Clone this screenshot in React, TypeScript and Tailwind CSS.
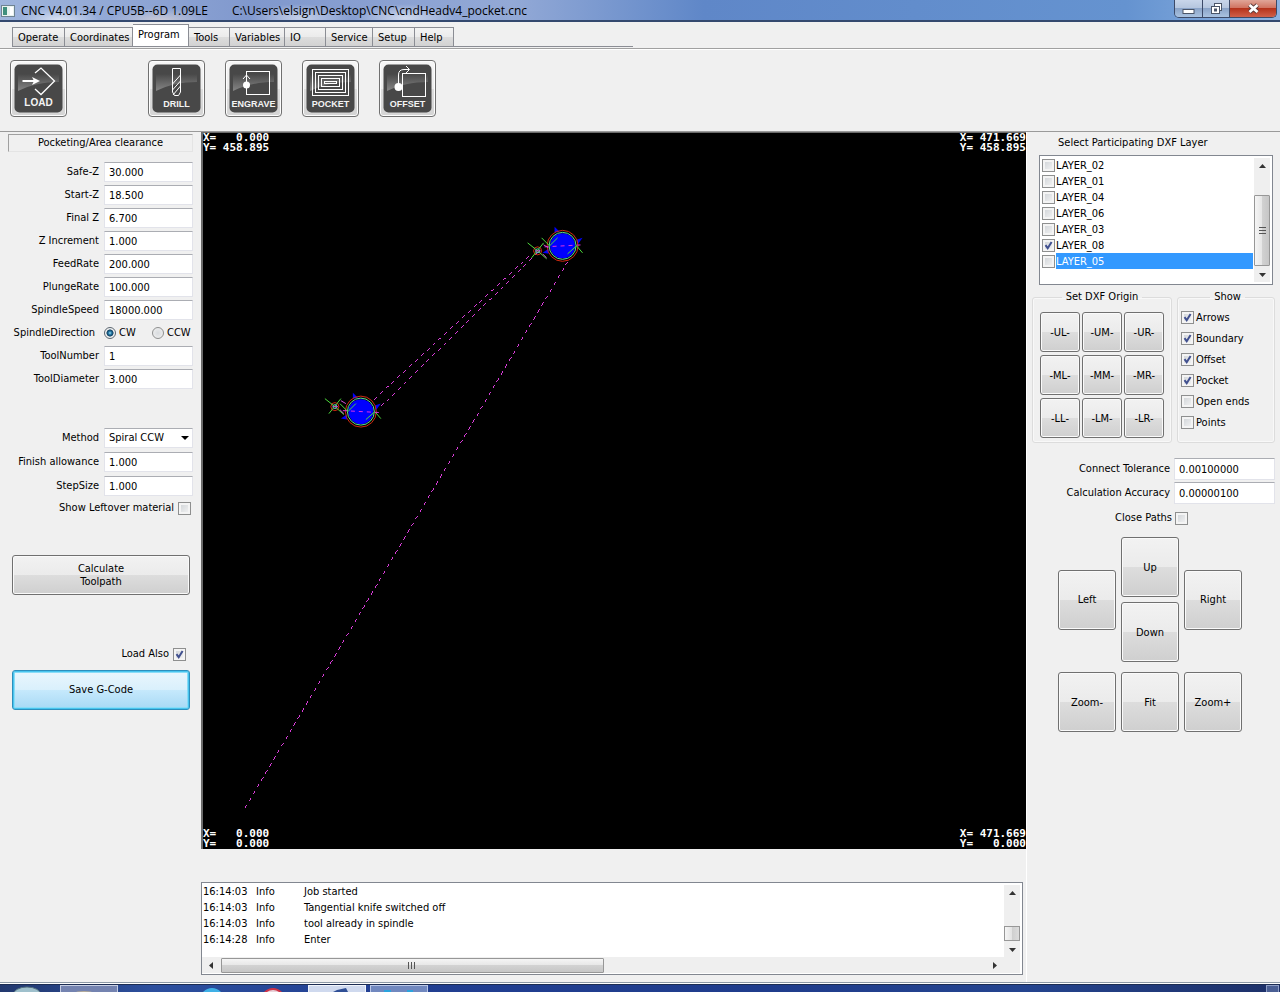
import { useState } from "react";
import type { ReactNode } from "react";
import clsx from "clsx";

const buttonFace =
  "border border-[#707070] rounded-[3px] text-center leading-[13px] bg-[linear-gradient(#f2f2f2,#ebebeb_50%,#dddddd_50%,#cfcfcf)] shadow-[inset_0_0_0_1px_#fafafa]";
const fieldFace = "h-5 border border-[#e2e3ea] border-t-[#abadb3] bg-white px-1 outline-none";

const tabs = [
  { name: "Operate", width: "w-[53px]" },
  { name: "Coordinates", width: "w-[68px]" },
  { name: "Program", width: "w-14" },
  { name: "Tools", width: "w-[41px]" },
  { name: "Variables", width: "w-[55px]" },
  { name: "IO", width: "w-[41px]" },
  { name: "Service", width: "w-[47px]" },
  { name: "Setup", width: "w-[42px]" },
  { name: "Help", width: "w-[39px]" },
];

const cutParams = [
  { label: "Safe-Z", value: "30.000" },
  { label: "Start-Z", value: "18.500" },
  { label: "Final Z", value: "6.700" },
  { label: "Z Increment", value: "1.000" },
  { label: "FeedRate", value: "200.000" },
  { label: "PlungeRate", value: "100.000" },
  { label: "SpindleSpeed", value: "18000.000" },
];

const layers = ["LAYER_02", "LAYER_01", "LAYER_04", "LAYER_06", "LAYER_03", "LAYER_08", "LAYER_05"];
const origins = ["-UL-", "-UM-", "-UR-", "-ML-", "-MM-", "-MR-", "-LL-", "-LM-", "-LR-"];
const showOptions = ["Arrows", "Boundary", "Offset", "Pocket", "Open ends", "Points"];

const logRows = [
  { time: "16:14:03", level: "Info", text: "Job started" },
  { time: "16:14:03", level: "Info", text: "Tangential knife switched off" },
  { time: "16:14:03", level: "Info", text: "tool already in spindle" },
  { time: "16:14:28", level: "Info", text: "Enter" },
];

function Check({ id, defaultChecked }: { id: string; defaultChecked?: boolean }) {
  return (
    <span className="grid size-[13px] shrink-0">
      <input
        id={id}
        type="checkbox"
        defaultChecked={defaultChecked}
        className="peer [grid-area:1/1] appearance-none size-[13px] border border-[#8e8f8f] bg-[linear-gradient(135deg,#cdd1d5,#f6f6f6)] shadow-[inset_0_0_0_2px_#f4f4f4]"
      />
      <svg viewBox="0 0 13 13" className="[grid-area:1/1] size-[13px] pointer-events-none invisible peer-checked:visible">
        <path d="M3.5 6.2 L5.7 9.2 L9.6 3" fill="none" stroke="#41508f" strokeWidth="2" />
      </svg>
    </span>
  );
}

function Field({ label, value }: { label: string; value: string }) {
  const id = label.replace(/\s/g, "-");
  return (
    <div className="flex items-center gap-[5px]">
      <label htmlFor={id} className="flex-1 text-right whitespace-nowrap">
        {label}
      </label>
      <input id={id} defaultValue={value} className={clsx(fieldFace, "w-[89px]")} />
    </div>
  );
}

function Arrow({ d }: { d: string }) {
  return (
    <svg viewBox="0 0 7 7" className="size-[7px]">
      <path d={d} fill="#333" />
    </svg>
  );
}

const arrowUp = "M0 5 L3.5 1 L7 5 Z";
const arrowDown = "M0 2 L3.5 6 L7 2 Z";
const arrowLeft = "M5 0 L1 3.5 L5 7 Z";
const arrowRight = "M2 0 L6 3.5 L2 7 Z";

function ScrollButton({ label, d }: { label: string; d: string }) {
  return (
    <button aria-label={label} className="size-4 shrink-0 flex items-center justify-center">
      <Arrow d={d} />
    </button>
  );
}

function TitleBar() {
  const glass = "flex items-center justify-center border-r border-[#3c4a68] bg-[linear-gradient(#c9d6ea,#b4c5de_50%,#8ba4c8_50%,#a9c2e0)]";
  return (
    <header className="h-[22px] flex items-start border-b-2 border-[#34496f] bg-[radial-gradient(ellipse_40px_12px_at_60px_20px,#ffffffaa,transparent),radial-gradient(ellipse_50px_12px_at_160px_20px,#e9ddd9aa,transparent),radial-gradient(ellipse_50px_14px_at_300px_18px,#ffffff88,transparent),radial-gradient(ellipse_50px_14px_at_405px_18px,#ffffff99,transparent),linear-gradient(90deg,#9fb5dd,#8098cd_20%,#93a9d6_40%,#5f87c8_55%,#6593d0_88%,#8db3e2)]">
      <svg viewBox="0 0 14 12" className="w-3.5 h-3 mt-[5px] ml-px">
        <rect x="0.5" y="0.5" width="13" height="11" fill="#e8f2f0" stroke="#6f8392" />
        <rect x="2" y="2" width="4" height="8" fill="#3f8f7e" />
        <rect x="9" y="2" width="3" height="8" fill="#ffffff" />
      </svg>
      <h1 className="ml-1.5 mt-px font-['Open_Sans','Noto_Sans',sans-serif] text-[12px] leading-5 whitespace-nowrap text-black">
        CNC V4.01.34 / CPU5B--6D 1.09LE
      </h1>
      <p className="ml-6 mt-px font-['Open_Sans','Noto_Sans',sans-serif] text-[12px] leading-5 whitespace-nowrap text-black">
        C:\Users\elsign\Desktop\CNC\cndHeadv4_pocket.cnc
      </p>
      <div className="ml-auto mr-[3px] h-[18px] flex overflow-hidden rounded-b-[5px] border border-t-0 border-[#3c4a68]">
        <button aria-label="Minimize" className={clsx(glass, "w-7")}>
          <svg viewBox="0 0 13 12" className="w-[13px] h-3">
            <rect x="1" y="6.5" width="11" height="4" fill="#fff" stroke="#4a5568" />
          </svg>
        </button>
        <button aria-label="Restore" className={clsx(glass, "w-[27px]")}>
          <svg viewBox="0 0 13 13" className="size-[13px]">
            <rect x="4.5" y="1.5" width="7" height="7" fill="#fff" stroke="#4a5568" />
            <rect x="1.5" y="4.5" width="8" height="7" fill="#fff" stroke="#4a5568" />
            <rect x="4.5" y="7" width="2" height="2" fill="#9ab" stroke="#4a5568" />
          </svg>
        </button>
        <button aria-label="Close" className="w-[46px] flex items-center justify-center bg-[linear-gradient(#e0a598,#cf6f5c_50%,#b5331c_50%,#d0604a)]">
          <svg viewBox="0 0 13 12" className="w-[13px] h-3">
            <path d="M2.5 2 L10.5 9 M10.5 2 L2.5 9" stroke="#5b3b3b" strokeWidth="4.5" />
            <path d="M2.5 2 L10.5 9 M10.5 2 L2.5 9" stroke="#fff" strokeWidth="2.8" />
          </svg>
        </button>
      </div>
    </header>
  );
}

function TabBar() {
  const [active, setActive] = useState("Program");
  return (
    <nav className="h-[27px] border-b border-[#a0a0a0]">
      <div role="tablist" className="ml-3 mr-auto w-[621px] h-[25px] flex items-end border-b border-[#8b8d94]">
        {tabs.map((tab) => (
          <button
            key={tab.name}
            role="tab"
            aria-selected={tab.name === active}
            onClick={() => setActive(tab.name)}
            className={clsx(
              "border border-[#8b8d94] border-b-0 border-l-0 first:border-l pl-[5px] text-left whitespace-nowrap",
              tab.width,
              tab.name === active
                ? "h-[22px] bg-white pb-0.5"
                : "h-[19px] pt-px bg-[linear-gradient(#f3f3f3,#ebebeb_50%,#dddddd_50%,#d2d2d2)]"
            )}
          >
            {tab.name}
          </button>
        ))}
      </div>
    </nav>
  );
}

function ToolButton({ name, big, children }: { name: string; big?: boolean; children: ReactNode }) {
  return (
    <button
      aria-label={name}
      className="size-[57px] flex items-center justify-center border border-[#707070] rounded-[4px] bg-[linear-gradient(#f6f6f6,#ececec_50%,#dedede_50%,#d4d4d4)] shadow-[inset_0_0_0_1px_#fdfdfd]"
    >
      <svg viewBox="0 0 49 49" className="size-[49px]">
        <defs>
          <linearGradient id={`gloss-${name}`} x1="0" y1="0" x2="0" y2="1">
            <stop offset="0" stopColor="#484848" />
            <stop offset="1" stopColor="#868686" />
          </linearGradient>
        </defs>
        <rect x="0.5" y="0.5" width="48" height="48" rx="5" fill="#484848" />
        <path d="M4 27 V10 H45 V18 C30 18 16 21 4 27 Z" fill={`url(#gloss-${name})`} />
        <g fill="none" stroke="#fff">
          {children}
        </g>
        <text
          x="24.5"
          y={big ? 42 : 43}
          textAnchor="middle"
          fill="#f4f4f4"
          fontFamily="Liberation Sans, Arial, sans-serif"
          fontWeight="bold"
          fontSize={big ? 10 : 9}
        >
          {name}
        </text>
      </svg>
    </button>
  );
}

function Toolbar() {
  return (
    <div className="h-[83px] flex items-start gap-5 pl-2.5 pt-2.5 border-t border-t-white border-b border-b-[#9a9a9a]">
      <div className="mr-[61px] flex">
        <ToolButton name="LOAD" big>
          <path d="M21 9 L27 4 L40.5 17 L27 30.5 L21 25" strokeWidth="1.3" />
          <path d="M8.5 17 H20" strokeWidth="2" />
          <path d="M18 13 L26 17 L18 21 L20 17 Z" fill="#fff" stroke="none" />
        </ToolButton>
      </div>
      <ToolButton name="DRILL">
        <path d="M20.5 4.5 H28.5 V28 L26.5 31.5 H22.5 L20.5 28 Z" />
        <path d="M20.5 20 L28.5 11 M20.5 26 L28.5 17 M21 31 L28.5 22" />
      </ToolButton>
      <ToolButton name="ENGRAVE">
        <rect x="17.5" y="7.5" width="23" height="23" />
        <path d="M17.5 20 V11 M14 15 L17.5 11 L21 15" />
        <circle cx="17.5" cy="21" r="3.5" fill="#fff" stroke="none" />
      </ToolButton>
      <ToolButton name="POCKET">
        <rect x="6.5" y="5.5" width="36" height="26" />
        <rect x="9.5" y="8.5" width="30" height="20" />
        <rect x="12.5" y="11.5" width="24" height="14" />
        <rect x="15.5" y="14.5" width="18" height="8" />
        <rect x="18.5" y="17.5" width="12" height="2" />
      </ToolButton>
      <ToolButton name="OFFSET">
        <rect x="19.5" y="9.5" width="23" height="23" />
        <path d="M15.5 22 V11 Q15.5 5.5 21 5.5 H26 M23 2 L26.5 5.5 L23 9" />
        <circle cx="15.5" cy="23" r="4" fill="#fff" stroke="none" />
      </ToolButton>
    </div>
  );
}

function Radio({ defaultChecked }: { defaultChecked?: boolean }) {
  return (
    <input
      type="radio"
      name="spindle-direction"
      defaultChecked={defaultChecked}
      className="appearance-none size-3 rounded-full border border-[#8e8f8f] bg-[radial-gradient(circle,#d8dbde,#f2f2f2)] checked:border-[#5b6670] checked:bg-[radial-gradient(circle_at_50%_50%,#9fe0f5,#1e6f9c_25%,#12405f_45%,#f2f2f2_55%)]"
    />
  );
}

function LeftPanel() {
  return (
    <aside className="w-[201px] shrink-0 flex flex-col">
      <h2 className="mt-0.5 mx-2 h-[18px] leading-4 text-center border border-[#e4e4e4] border-t-[#a0a0a0] border-l-[#a0a0a0]">
        Pocketing/Area clearance
      </h2>
      <div className="mt-2.5 pr-2 flex flex-col gap-[3px]">
        {cutParams.map((p) => (
          <Field key={p.label} label={p.label} value={p.value} />
        ))}
        <div role="radiogroup" aria-label="SpindleDirection" className="h-5 flex items-center">
          <span className="w-[95px] text-right">SpindleDirection</span>
          <label className="ml-[9px] w-12 flex items-center gap-[3px]">
            <Radio defaultChecked />
            CW
          </label>
          <label className="flex items-center gap-[3px]">
            <Radio />
            CCW
          </label>
        </div>
        <Field label="ToolNumber" value="1" />
        <Field label="ToolDiameter" value="3.000" />
      </div>
      <div className="mt-[39px] pr-2 flex flex-col gap-1">
        <div className="flex items-center gap-[5px]">
          <label htmlFor="method" className="flex-1 text-right">
            Method
          </label>
          <span className="grid w-[89px]">
            <select id="method" className={clsx(fieldFace, "[grid-area:1/1] appearance-none w-full")}>
              <option>Spiral CCW</option>
              <option>Spiral CW</option>
            </select>
            <svg viewBox="0 0 8 4" className="[grid-area:1/1] w-2 h-1 mr-1 self-center justify-self-end pointer-events-none">
              <path d="M0 0 H8 L4 4 Z" fill="#000" />
            </svg>
          </span>
        </div>
        <Field label="Finish allowance" value="1.000" />
        <Field label="StepSize" value="1.000" />
        <div className="h-4 flex items-center justify-end gap-1 pr-0.5">
          <label htmlFor="leftover">Show Leftover material</label>
          <Check id="leftover" />
        </div>
      </div>
      <button className={clsx(buttonFace, "mt-[39px] ml-3 mr-[11px] h-10")}>
        Calculate
        <br />
        Toolpath
      </button>
      <div className="mt-[49px] h-5 flex items-center justify-end gap-1 pr-[15px]">
        <label htmlFor="load-also">Load Also</label>
        <Check id="load-also" defaultChecked />
      </div>
      <button className="mt-1.5 ml-3 mr-[11px] h-10 border border-[#2c8fbd] rounded-[3px] bg-[linear-gradient(#eaf6fd,#d9f0fc_50%,#c6e9fc_50%,#a7d9f5)] shadow-[inset_0_0_0_1px_#48c4ee,inset_0_0_0_2px_#8adcf7]">
        Save G-Code
      </button>
    </aside>
  );
}

// one pocketed hole with its small lead-in hole, centred on x,y
function Hole({ x, y, small, moveY }: { x: number; y: number; small: { x: number; y: number }; moveY: number }) {
  return (
    <g transform={`translate(${x} ${y})`} fill="none">
      <g fill="#0000ff">
        <path d="M-8 -19 L-3 -14 L-8 -13 Z" />
        <path d="M14 -6 L20 -8 L15 -1 Z" />
        <path d="M-20 7 L-14 3 L-14 8 Z" />
        <circle r="12.5" />
      </g>
      <circle r="15.5" stroke="#d02a10" />
      <circle r="13.5" stroke="#5be08c" />
      <g stroke="#4ddc3c">
        <path d="M-21 -8 L-13 0 L-5 -8" />
        <path d="M5 8 L14 0 L20 7" />
      </g>
      <g transform={`translate(${small.x} ${small.y})`}>
        <circle r="4" stroke="#d02a10" />
        <circle r="2" stroke="#58a8e0" />
        <path d="M-10 -8 L0 0 L9 8 M6 -8 L-6 7" stroke="#4ddc3c" />
        <path d="M-2 0 H3 M6 -6 L11 -3 M5 3 L9 7" stroke="#d64fd6" />
      </g>
      <path d={`M-18 ${-moveY} L20 ${moveY}`} stroke="#e030e0" strokeDasharray="4 4" />
    </g>
  );
}

function Plot() {
  const corner = "absolute whitespace-pre";
  return (
    <div className="relative flex-1 bg-black border-l-2 border-t border-[#6b6b6b] overflow-hidden font-['DejaVu_Sans_Mono',monospace] font-bold text-[11px] leading-[10px] text-white">
      <svg viewBox="0 0 824 717" className="absolute inset-0 size-full">
        <g fill="none" stroke="#d63cd6" strokeDasharray="4 4" shapeRendering="crispEdges">
          <path d="M42 676 L365 129" />
          <path d="M171 267 L328 122" />
          <path d="M178 274 L336 119" />
        </g>
        <Hole x={360} y={113} small={{ x: -25, y: 5 }} moveY={-1} />
        <Hole x={158} y={279} small={{ x: -26, y: -5 }} moveY={1} />
      </svg>
      <p className={clsx(corner, "left-0 top-0")}>{"X=   0.000\nY= 458.895"}</p>
      <p className={clsx(corner, "right-0 top-0")}>{"X= 471.669\nY= 458.895"}</p>
      <p className={clsx(corner, "left-0 bottom-0")}>{"X=   0.000\nY=   0.000"}</p>
      <p className={clsx(corner, "right-0 bottom-0")}>{"X= 471.669\nY=   0.000"}</p>
    </div>
  );
}

function MessageLog() {
  return (
    <div className="mt-[33px] mb-[7px] mr-[3px] h-[93px] flex flex-col border border-[#828790] bg-white">
      <div className="flex-1 flex justify-between">
        <table className="self-start mt-px">
          <tbody>
            {logRows.map((row, i) => (
              <tr key={i} className="h-4">
                <td className="w-[54px] pl-px">{row.time}</td>
                <td className="w-12">{row.level}</td>
                <td className="whitespace-nowrap">{row.text}</td>
              </tr>
            ))}
          </tbody>
        </table>
        <div className="w-4 mr-0.5 mt-0.5 flex flex-col bg-[#efefef]">
          <ScrollButton label="Scroll up" d={arrowUp} />
          <div className="flex-1 flex flex-col justify-end">
            <div className="h-[15px] border border-[#979797] bg-[linear-gradient(90deg,#f5f5f5,#e3e3e3_50%,#cfcfcf_50%,#dcdcdc)]" />
          </div>
          <ScrollButton label="Scroll down" d={arrowDown} />
        </div>
      </div>
      <div className="h-4 mb-px mr-0.5 flex items-center bg-[#efefef] pl-px">
        <ScrollButton label="Scroll left" d={arrowLeft} />
        <div className="flex-1 ml-0.5">
          <div className="w-1/2 h-[15px] flex items-center justify-center border border-[#979797] rounded-[1px] bg-[linear-gradient(#f5f5f5,#e6e6e6_50%,#d2d2d2_50%,#c6c6c6)]">
            <svg viewBox="0 0 8 7" className="w-2 h-[7px]">
              <path d="M0.5 0 V7 M3.5 0 V7 M6.5 0 V7" stroke="#555" />
            </svg>
          </div>
        </div>
        <ScrollButton label="Scroll right" d={arrowRight} />
        <div className="w-[18px]" />
      </div>
    </div>
  );
}

function LayerList() {
  const [selected, setSelected] = useState("LAYER_05");
  return (
    <div className="ml-3 mr-[7px] mt-[3px] h-[130px] flex border border-[#828790] bg-white">
      <ul className="flex-1 pt-px pl-0.5">
        {layers.map((layer) => (
          <li key={layer} className="h-4 flex items-center">
            <Check id={layer} defaultChecked={layer === "LAYER_08"} />
            <label
              htmlFor={layer}
              onClick={() => setSelected(layer)}
              className={clsx("flex-1 ml-px h-4 leading-[18px]", layer === selected && "bg-[#3399ff] text-white")}
            >
              {layer}
            </label>
          </li>
        ))}
      </ul>
      <div className="w-4 ml-px mr-0.5 my-0.5 flex flex-col bg-[#efefef]">
        <ScrollButton label="Scroll up" d={arrowUp} />
        <div className="flex-1 flex flex-col justify-end">
          <div className="h-[71px] flex items-center justify-center border border-[#979797] rounded-[1px] bg-[linear-gradient(90deg,#f5f5f5,#e6e6e6_50%,#d2d2d2_50%,#c6c6c6)]">
            <svg viewBox="0 0 7 8" className="w-[7px] h-2">
              <path d="M0 0.5 H7 M0 3.5 H7 M0 6.5 H7" stroke="#555" />
            </svg>
          </div>
        </div>
        <ScrollButton label="Scroll down" d={arrowDown} />
      </div>
    </div>
  );
}

function RightPanel() {
  const group = "border border-[#dcdcdc] rounded-[3px] shadow-[inset_0_0_0_1px_#f8f8f8]";
  const padButton = clsx(buttonFace, "w-[58px] h-[60px]");
  return (
    <aside className="w-[254px] shrink-0 border-l border-white">
      <h2 className="mt-0.5 h-[18px] leading-[18px] pl-[31px]">Select Participating DXF Layer</h2>
      <LayerList />
      <div className="mt-1 ml-[5px] mr-[5px] flex justify-between">
        <fieldset className={clsx(group, "w-[140px] px-[7px] pb-1")}>
          <legend className="mx-auto px-1 leading-4">Set DXF Origin</legend>
          <div className="mt-[7px] grid grid-cols-3 gap-x-0.5 gap-y-[3px]">
            {origins.map((o) => (
              <button key={o} className={clsx(buttonFace, "h-10")}>
                {o}
              </button>
            ))}
          </div>
        </fieldset>
        <fieldset className={clsx(group, "w-[98px] pl-[3px]")}>
          <legend className="mx-auto px-1 leading-4">Show</legend>
          <div className="mt-0.5 flex flex-col">
            {showOptions.map((opt, i) => (
              <div key={opt} className="h-[21px] flex items-center gap-0.5">
                <Check id={opt} defaultChecked={i < 4} />
                <label htmlFor={opt}>{opt}</label>
              </div>
            ))}
          </div>
        </fieldset>
      </div>
      <div className="mt-[15px] mr-[5px] flex flex-col gap-0.5">
        <div className="flex items-center gap-1">
          <label htmlFor="tolerance" className="flex-1 text-right">Connect Tolerance</label>
          <input id="tolerance" defaultValue="0.00100000" className={clsx(fieldFace, "w-[101px] min-h-[22px]")} />
        </div>
        <div className="flex items-center gap-1">
          <label htmlFor="accuracy" className="flex-1 text-right">Calculation Accuracy</label>
          <input id="accuracy" defaultValue="0.00000100" className={clsx(fieldFace, "w-[101px] min-h-[22px]")} />
        </div>
      </div>
      <div className="mt-1 h-5 pr-[92px] flex items-center justify-end gap-[3px]">
        <label htmlFor="close-paths">Close Paths</label>
        <Check id="close-paths" />
      </div>
      <div className="mt-[9px] ml-[31px] flex items-center gap-[5px]">
        <button className={padButton}>Left</button>
        <div className="flex flex-col gap-[5px]">
          <button className={padButton}>Up</button>
          <button className={padButton}>Down</button>
        </div>
        <button className={padButton}>Right</button>
      </div>
      <div className="mt-2.5 ml-[31px] flex gap-[5px]">
        <button className={padButton}>Zoom-</button>
        <button className={padButton}>Fit</button>
        <button className={padButton}>Zoom+</button>
      </div>
    </aside>
  );
}

// only the top edge of the desktop taskbar shows under the window
function TaskbarEdge() {
  return (
    <footer className="h-[10px] flex items-end border-t border-[#8d99a6] bg-[linear-gradient(#ffffff_1px,#1c2c52_1px,#1c2c52_2px,transparent_2px),linear-gradient(90deg,#22386e,#2c4f9e_12%,#213f92_30%,#1f3c8c_60%,#24448f_80%,#1d3068)]">
      <svg viewBox="0 0 430 7" className="w-[430px] h-[7px]">
        <ellipse cx="27" cy="10" rx="14" ry="8" fill="#9fc0cc" stroke="#54707f" />
        <rect x="60.5" y="0.5" width="57" height="9" fill="#7483b0" stroke="#c5cde2" />
        <ellipse cx="84" cy="8" rx="9" ry="2" fill="#b8ae98" />
        <circle cx="212" cy="15" r="12" fill="#3fb0e6" />
        <circle cx="273" cy="15" r="11" fill="#e9d3da" stroke="#cf3347" strokeWidth="2" />
        <rect x="308.5" y="0.5" width="57" height="9" fill="#cfd9ee" stroke="#f0f4fb" />
        <path d="M333 7 L337 5 L346 3 L348 7 Z" fill="#2f4f96" />
        <rect x="370.5" y="0.5" width="57" height="9" fill="#7188bf" stroke="#b9c6e6" />
        <path d="M384 5 H391 V7 H384 Z M407 5 H413 V7 H407 Z" fill="#2aa3dd" />
      </svg>
      <div className="ml-auto mr-px w-[13px] h-[7px] border border-b-0 border-[#8c9cc4] bg-[#4a5f94]" />
    </footer>
  );
}

export default function App() {
  return (
    <div className="min-h-screen flex flex-col bg-[#f0f0f0] font-['DejaVu_Sans_Condensed','DejaVu_Sans',sans-serif] text-[11px] leading-[14px] text-black">
      <TitleBar />
      <TabBar />
      <Toolbar />
      <main className="flex-1 flex">
        <LeftPanel />
        <section className="flex-1 flex flex-col">
          <Plot />
          <MessageLog />
        </section>
        <RightPanel />
      </main>
      <TaskbarEdge />
    </div>
  );
}
